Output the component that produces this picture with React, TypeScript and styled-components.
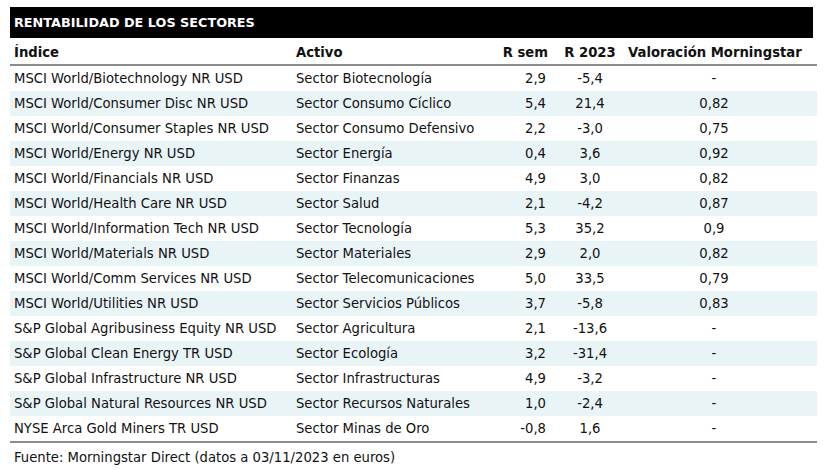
import React from 'react';
import styled, { createGlobalStyle } from 'styled-components';

const GlobalStyle = createGlobalStyle`
  body {
    margin: 0;
    background: #ffffff;
    font-family: "DejaVu Sans", Verdana, sans-serif;
    color: #111111;
  }
`;

const Wrapper = styled.div`
  padding: 7px 13px 0 10px;
  width: 803px;
`;

const TitleBar = styled.div`
  background: #000000;
  color: #ffffff;
  font-weight: bold;
  font-size: 12.8px;
  height: 31px;
  line-height: 31px;
  padding-left: 4px;
`;

const Table = styled.table`
  width: 803px;
  border-collapse: collapse;
  table-layout: fixed;
  font-size: 13.2px;
`;

const HeadCell = styled.th<{ $align?: string; $w: number; $padL?: number }>`
  width: ${p => p.$w}px;
  text-align: ${p => p.$align || 'left'};
  font-weight: bold;
  line-height: 15px;
  padding: 7px 4px 4px ${p => p.$padL ?? 4}px;
  border-bottom: 2px solid #8c8c8c;
  white-space: nowrap;
`;

const Row = styled.tr<{ $shaded: boolean; $last: boolean }>`
  background: ${p => (p.$shaded ? '#e9f4f7' : '#ffffff')};
  border-bottom: ${p => (p.$last ? '2px solid #8c8c8c' : 'none')};
`;

const Cell = styled.td<{ $align?: string; $padR?: number; $padL?: number }>`
  height: 25px;
  padding: 0 ${p => p.$padR ?? 4}px 0 ${p => p.$padL ?? 4}px;
  text-align: ${p => p.$align || 'left'};
  white-space: nowrap;
`;

const Footer = styled.div`
  font-size: 13.2px;
  padding: 7px 0 0 4px;
`;

const rows: [string, string, string, string, string][] = [
  ['MSCI World/Biotechnology NR USD', 'Sector Biotecnología', '2,9', '-5,4', '-'],
  ['MSCI World/Consumer Disc NR USD', 'Sector Consumo Cíclico', '5,4', '21,4', '0,82'],
  ['MSCI World/Consumer Staples NR USD', 'Sector Consumo Defensivo', '2,2', '-3,0', '0,75'],
  ['MSCI World/Energy NR USD', 'Sector Energía', '0,4', '3,6', '0,92'],
  ['MSCI World/Financials NR USD', 'Sector Finanzas', '4,9', '3,0', '0,82'],
  ['MSCI World/Health Care NR USD', 'Sector Salud', '2,1', '-4,2', '0,87'],
  ['MSCI World/Information Tech NR USD', 'Sector Tecnología', '5,3', '35,2', '0,9'],
  ['MSCI World/Materials NR USD', 'Sector Materiales', '2,9', '2,0', '0,82'],
  ['MSCI World/Comm Services NR USD', 'Sector Telecomunicaciones', '5,0', '33,5', '0,79'],
  ['MSCI World/Utilities NR USD', 'Sector Servicios Públicos', '3,7', '-5,8', '0,83'],
  ['S&P Global Agribusiness Equity NR USD', 'Sector Agricultura', '2,1', '-13,6', '-'],
  ['S&P Global Clean Energy TR USD', 'Sector Ecología', '3,2', '-31,4', '-'],
  ['S&P Global Infrastructure NR USD', 'Sector Infrastructuras', '4,9', '-3,2', '-'],
  ['S&P Global Natural Resources NR USD', 'Sector Recursos Naturales', '1,0', '-2,4', '-'],
  ['NYSE Arca Gold Miners TR USD', 'Sector Minas de Oro', '-0,8', '1,6', '-'],
];

export default function App() {
  return (
    <Wrapper>
      <GlobalStyle />
      <TitleBar>RENTABILIDAD DE LOS SECTORES</TitleBar>
      <Table>
        <thead>
          <tr>
            <HeadCell $w={274}>Índice</HeadCell>
            <HeadCell $w={190}>Activo</HeadCell>
            <HeadCell $w={54} $align="right">R sem</HeadCell>
            <HeadCell $w={60} $align="center" $padL={8}>R 2023</HeadCell>
            <HeadCell $w={172} $align="center">Valoración Morningstar</HeadCell>
            <HeadCell $w={5}></HeadCell>
          </tr>
        </thead>
        <tbody>
          {rows.map((r, i) => (
            <Row key={r[0]} $shaded={i % 2 === 1} $last={i === rows.length - 1}>
              <Cell>{r[0]}</Cell>
              <Cell>{r[1]}</Cell>
              <Cell $align="right" $padR={6}>{r[2]}</Cell>
              <Cell $align="center" $padL={8}>{r[3]}</Cell>
              <Cell $align="center">{r[4]}</Cell>
              <Cell />
            </Row>
          ))}
        </tbody>
      </Table>
      <Footer>Fuente: Morningstar Direct (datos a 03/11/2023 en euros)</Footer>
    </Wrapper>
  );
}
